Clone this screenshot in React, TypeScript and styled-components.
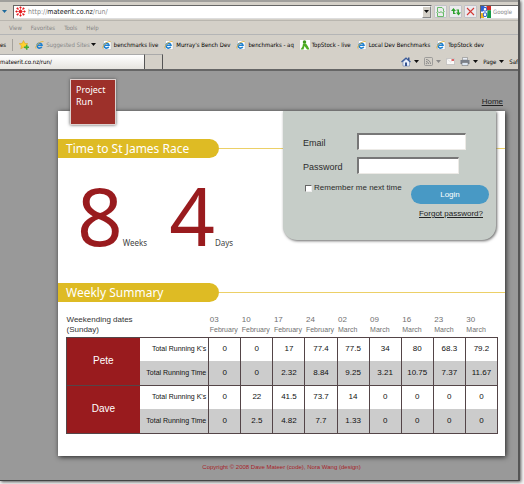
import React from "react";
import styled, { createGlobalStyle } from "styled-components";

const uiFont = `"DejaVu Sans Condensed", "DejaVu Sans", sans-serif`;
const bodyFont = `"Liberation Sans", Arial, sans-serif`;
const titleFont = `"Noto Sans", "Open Sans", sans-serif`;

const GlobalStyle = createGlobalStyle`
  * { box-sizing: border-box; }
  body { margin: 0; background: #f4f4f4; overflow: hidden; }
  button, input { font: inherit; color: inherit; }
  svg { flex: none; }
`;

const Window = styled.div`
  margin: 0 4px 3px 0;
  min-height: calc(100vh - 3px);
  display: flex;
  flex-direction: column;
  background: #999;
  border-right: 2px solid #555;
  border-bottom: 1px solid #444;
  box-shadow: 1px 1px 3px #555;
  overflow: hidden;
`;

const Chrome = styled.div`
  background: #d4d0c8;
  border-top: 2px solid #a09f9c;
  border-bottom: 2px solid #666;
  font: 6px/10px ${uiFont};
  color: #000;
`;

const AddressBar = styled.div`
  display: flex;
  align-items: center;
  height: 19px;
  padding-top: 1px;
  border-bottom: 1px solid #b9b6af;
`;

const Arrow = styled.svg`
  width: 5px;
  height: 3px;
`;

const HistoryButton = styled.button`
  width: 13px;
  padding: 0 0 0 2px;
  border: 0;
  background: none;
  display: flex;
`;

const AddressBox = styled.label`
  flex: 1;
  min-width: 0;
  height: 14px;
  display: flex;
  align-items: center;
  gap: 2px;
  padding-left: 1px;
  background: #fff;
  border: 1px solid #666;
  border-right-color: #ddd;
  border-bottom-color: #ddd;
`;

const Url = styled.span`
  flex: 1;
  color: #888;
  font-size: 7px;
  b { color: #111; font-weight: 400; }
`;

const DropButton = styled.button`
  width: 9px;
  height: 12px;
  padding: 0;
  display: grid;
  place-items: center;
  background: #d4d0c8;
  border: 1px solid #888;
  border-top-color: #fff;
  border-left-color: #fff;
`;

const ToolButton = styled.button`
  width: 13px;
  height: 13px;
  margin-left: 2px;
  padding: 1px;
  display: grid;
  place-items: center;
  background: #ecebee;
  border: 1px solid #c2c2c6;
  border-radius: 1px;
`;

const SearchBox = styled.label`
  width: 38px;
  height: 14px;
  margin-left: 3px;
  display: flex;
  align-items: center;
  gap: 2px;
  background: #fff;
  border: 1px solid #666;
  border-right: 0;
  border-bottom-color: #ddd;
`;

const SearchInput = styled.input`
  width: 25px;
  padding: 0;
  border: 0;
  outline: 0;
  background: none;
  &::placeholder { color: #888; opacity: 1; }
`;

const MenuBar = styled.nav`
  display: flex;
  align-items: center;
  gap: 9px;
  height: 14px;
  padding-left: 9px;
  border-bottom: 1px solid #b4b5b6;
`;

const MenuItem = styled.button`
  padding: 0;
  border: 0;
  background: none;
  color: #858585;
`;

const Favorites = styled.nav`
  display: flex;
  align-items: center;
  gap: 6px;
  height: 19px;
  white-space: nowrap;
`;

const Divider = styled.span`
  width: 1px;
  height: 12px;
  background: #a5a29c;
`;

const Favorite = styled.a<{ $muted?: boolean }>`
  display: flex;
  align-items: center;
  gap: ${(p) => (p.$muted ? 1 : 2)}px;
  color: ${(p) => (p.$muted ? "#888" : "#000")};
  text-decoration: none;
`;

const TabRow = styled.div`
  display: flex;
  align-items: stretch;
  height: 15px;
`;

const Tab = styled.button`
  width: 28%;
  padding: 0;
  text-align: left;
  background: linear-gradient(#fff, #e6e4df);
  border: 0;
  border-top: 1px solid #aaa;
  border-right: 1px solid #555;
`;

const NewTab = styled.button`
  width: 18px;
  border: 0;
  border-top: 1px solid #aaa;
  border-right: 1px solid #555;
  background: #d4d0c8;
`;

const Commands = styled.div`
  flex: 1;
  display: flex;
  align-items: center;
  justify-content: flex-end;
  gap: 5px;
  overflow: hidden;
`;

const Command = styled.button`
  padding: 0;
  border: 0;
  background: none;
  display: flex;
  align-items: center;
  gap: 3px;
`;

const Page = styled.main`
  flex: 1;
  position: relative;
  padding: 0 13px 0 58px;
  font: 8px/10px ${bodyFont};
  color: #2c2c2c;
`;

const TopNav = styled.nav`
  height: 40px;
  display: flex;
  justify-content: flex-end;
  align-items: flex-end;
  padding: 0 2px 4px;
`;

const TextLink = styled.a`
  color: #222;
  text-decoration: underline;
`;

const Logo = styled.h1`
  position: absolute;
  z-index: 1;
  top: 8px;
  left: 70px;
  width: 46px;
  height: 46px;
  margin: 0;
  padding: 4px 5px;
  background: #9d302a;
  border: 1px solid #ddd2d0;
  box-shadow: 0 0 3px #555;
  color: #fff;
  font: 9px/12px ${titleFont};
`;

const Card = styled.div`
  position: relative;
  padding: 28px 0 22px;
  background: #fff;
  box-shadow: 1px 1px 5px #222;
`;

const SectionHead = styled.div`
  display: flex;
  align-items: center;
  &::after {
    content: "";
    flex: 1;
    height: 1px;
    background: #ecd067;
  }
`;

const SectionTitle = styled.h2`
  width: 36%;
  height: 19px;
  margin: 0;
  padding-left: 8px;
  border-radius: 0 10px 10px 0;
  background: #debb24;
  color: #fff;
  font: 12px/19px ${titleFont};
  white-space: nowrap;
`;

const Countdown = styled.div`
  display: flex;
  align-items: baseline;
  gap: 22px;
  height: 125px;
  padding: 12px 0 0 19px;
`;

const Count = styled.div`
  display: flex;
  align-items: baseline;
  font: 8px/10px ${titleFont};
  color: #444;
`;

const Digit = styled.strong`
  color: #991b1e;
  font: 80px/90px ${titleFont};
`;

const LoginPanel = styled.form`
  position: absolute;
  top: 0;
  right: 9px;
  width: 213px;
  height: 129px;
  padding: 22px 7px 0 20px;
  background: #c6cdc8;
  border-radius: 0 0 14px 14px;
  box-shadow: 1px 1px 3px #666;
`;

const Field = styled.label`
  display: flex;
  align-items: center;
  height: 17px;
  margin-bottom: 7px;
  font-size: 9px;
`;

const FieldName = styled.span`
  width: 54px;
  padding-top: 3px;
`;

const TextInput = styled.input<{ $width: number }>`
  width: ${(p) => p.$width}px;
  height: 17px;
  padding: 1px 3px;
  background: #fff;
  border: 1px solid #eceae6;
  border-top: 2px solid #777;
  border-left: 2px solid #777;
  border-radius: 0;
`;

const Remember = styled.label`
  display: flex;
  align-items: center;
  gap: 2px;
  padding: 2px 0 0 2px;
`;

const Checkbox = styled.input`
  appearance: none;
  width: 7px;
  height: 7px;
  margin: 0;
  background: #fff;
  border: 1px solid #666;
  border-right-color: #eee;
  border-bottom-color: #eee;
  &:checked { background: #4899c5; }
`;

const LoginActions = styled.div`
  display: flex;
  flex-direction: column;
  align-items: flex-end;
  gap: 5px;
  margin-top: -8px;
`;

const LoginButton = styled.button`
  width: 78px;
  height: 19px;
  padding: 0;
  border: 0;
  border-radius: 10px;
  background: #4899c5;
  color: #fff;
`;

const Forgot = styled(TextLink)`
  margin-right: 6px;
`;

const Summary = styled.table`
  width: calc(100% - 15px);
  margin: 12px 7px 0 8px;
  table-layout: fixed;
  border-collapse: collapse;
`;

const NameCol = styled.col`
  width: 17%;
`;

const LabelCol = styled.col`
  width: 16%;
`;

const DateHead = styled.th`
  height: 23px;
  padding: 0 0 0 1px;
  color: #707070;
  font-weight: 400;
  text-align: left;
  vertical-align: middle;
`;

const Month = styled.span`
  display: block;
  font-size: 7px;
`;

const WeekHead = styled(DateHead)`
  padding: 0;
  color: #333;
`;

const Group = styled.tbody`
  border: 1px solid #544548;
`;

const Row = styled.tr<{ $shade?: boolean }>`
  height: 24px;
  background: ${(p) => (p.$shade ? "#ccc" : "#fff")};
`;

const Runner = styled.th`
  padding: 0;
  background: #991b1e;
  color: #fff;
  font-size: 10px;
  font-weight: 400;
`;

const RowLabel = styled.th`
  padding: 0 2px 0 0;
  font-weight: 400;
  font-size: 7px;
  text-align: right;
  white-space: nowrap;
  color: #111;
`;

const Cell = styled.td`
  padding: 0;
  border-left: 1px solid #544548;
  text-align: center;
  color: #111;
`;

const Copyright = styled.footer`
  padding: 6px 0 8px;
  color: #a8232a;
  font-size: 6px;
  text-align: center;
`;

const Down = ({ color = "#111" }: { color?: string }) => (
  <Arrow viewBox="0 0 5 3" aria-hidden="true">
    <path d="M0 0h5L2.5 3z" fill={color} />
  </Arrow>
);

const IeIcon = ({ page = true }: { page?: boolean }) => (
  <svg width="10" height="10" viewBox="0 0 20 20" aria-hidden="true">
    {page && <path d="M3 1h11l4 4v14H3z" fill="#fff" stroke="#b5b5b5" />}
    <path d="M13.500 13.500A5 5 0 1 1 14 10.500H6" fill="none" stroke="#1d7fd0" strokeWidth="3.200" />
    <path d="M2 17C-1 13 9 2 17 3" fill="none" stroke="#e9b53b" strokeWidth="1.800" />
  </svg>
);

const StarIcon = () => (
  <svg width="10" height="10" viewBox="0 0 20 20" aria-hidden="true">
    <path d="M9 1l2.6 5.6 6 .7-4.4 4.2 1.2 6L9 14.6 3.6 17.5l1.2-6L.4 7.3l6-.7z" fill="#ffd12e" stroke="#d69a18" />
    <path d="M10 13h4V9.500h3V13h3v3h-3v3.500h-3V16h-4z" fill="#3fae35" />
  </svg>
);

const SplatIcon = () => (
  <svg width="11" height="11" viewBox="0 0 22 22" fill="#e5191c" stroke="#e5191c" aria-hidden="true">
    <path d="M11 3v16M3 11h16M5 5l12 12M17 5L5 17" strokeWidth="1" />
    <circle cx="11" cy="11" r="3" />
    <circle cx="11" cy="3" r="1.600" /><circle cx="11" cy="19" r="1.600" />
    <circle cx="3" cy="11" r="1.600" /><circle cx="19" cy="11" r="1.600" />
    <circle cx="5" cy="5" r="1.600" /><circle cx="17" cy="5" r="1.600" />
    <circle cx="5" cy="17" r="1.600" /><circle cx="17" cy="17" r="1.600" />
  </svg>
);

const PersonIcon = () => (
  <svg width="10" height="10" viewBox="0 0 20 20" aria-hidden="true">
    <path d="M0 0h20v20H0z" fill="#fff" />
    <circle cx="9" cy="4" r="3.500" fill="#3e9a1d" />
    <path d="M6 7h6l4 6 3 6h-5l-5-7-2 7H1l4-6z" fill="#4fae25" />
  </svg>
);

const GoogleIcon = () => (
  <svg width="10" height="12" viewBox="0 0 20 22" preserveAspectRatio="none" aria-hidden="true">
    <path d="M0 0h20v22H0z" fill="#fff" />
    <path d="M0 0h7l-3 10H0z" fill="#2c5fd0" />
    <path d="M11 0h9v8h-9z" fill="#d22b28" />
    <path d="M13 8h7v14h-8z" fill="#159a45" />
    <path d="M0 13h6v9H0z" fill="#f4b61b" />
    <circle cx="8" cy="6" r="3.500" fill="#fff" stroke="#2c5fd0" strokeWidth="2" />
    <circle cx="8" cy="16" r="3.500" fill="#fff" stroke="#2c5fd0" strokeWidth="2" />
  </svg>
);

const HomeIcon = () => (
  <svg width="10" height="10" viewBox="0 0 20 20" aria-hidden="true">
    <path d="M4 9v9h13V9l-6-5z" fill="#e9effa" stroke="#5473ad" />
    <path d="M1 10L10 2l9 8" fill="none" stroke="#3b5c9c" strokeWidth="2.500" />
    <path d="M8 11h4v7H8z" fill="#35538f" />
    <path d="M14 1h3v5h-3z" fill="#35538f" />
  </svg>
);

const FeedIcon = () => (
  <svg width="9" height="9" viewBox="0 0 18 18" fill="none" stroke="#8b8b8b" aria-hidden="true">
    <rect x="1" y="1" width="16" height="16" rx="2" strokeWidth="1.500" />
    <path d="M4 5c5 0 9 4 9 9M4 9c3 0 5 2 5 5" strokeWidth="2" />
    <circle cx="5" cy="13" r="1" fill="#8b8b8b" />
  </svg>
);

const MailIcon = () => (
  <svg width="9" height="7" viewBox="0 0 18 14" aria-hidden="true">
    <path d="M1 1h16v12H1z" fill="#faf9f8" stroke="#aaa" />
    <path d="M1 1l8 7 8-7" fill="none" stroke="#ccc" />
    <path d="M11 2h5v4h-5z" fill="#d66" />
  </svg>
);

const PrinterIcon = () => (
  <svg width="10" height="9" viewBox="0 0 20 18" aria-hidden="true">
    <path d="M5 1h10v5H5z" fill="#e8edf5" stroke="#777" />
    <path d="M1 6h18v8H1z" fill="#7a7f88" />
    <path d="M4 11h12v6H4z" fill="#dce6f2" stroke="#666" />
  </svg>
);

const PageIcon = () => (
  <svg width="9" height="10" viewBox="0 0 18 20" fill="none" stroke="#59b558" aria-hidden="true">
    <path d="M3 1h9l3 3v5M3 9V1M3 12v7h12v-7" strokeWidth="1.800" />
    <path d="M1 11l3-2 3 3 3-3 3 3 4-3" strokeWidth="2" />
  </svg>
);

const RefreshIcon = () => (
  <svg width="10" height="9" viewBox="0 0 20 18" fill="#2ea12d" aria-hidden="true">
    <path d="M5 2l5 6H7v4h2v2H4V8H0zM15 17l-5-6h3V7h-2V5h5v6h4z" />
  </svg>
);

const StopIcon = () => (
  <svg width="9" height="9" viewBox="0 0 18 18" stroke="#d33a35" strokeWidth="2.200" aria-hidden="true">
    <path d="M2 2l14 14M16 2L2 16" />
  </svg>
);

const weeks = [
  ["03", "February"], ["10", "February"], ["17", "February"], ["24", "February"],
  ["02", "March"], ["09", "March"], ["16", "March"], ["23", "March"], ["30", "March"],
];

const runners = [
  {
    name: "Pete",
    distance: ["0", "0", "17", "77.4", "77.5", "34", "80", "68.3", "79.2"],
    time: ["0", "0", "2.32", "8.84", "9.25", "3.21", "10.75", "7.37", "11.67"],
  },
  {
    name: "Dave",
    distance: ["0", "22", "41.5", "73.7", "14", "0", "0", "0", "0"],
    time: ["0", "2.5", "4.82", "7.7", "1.33", "0", "0", "0", "0"],
  },
];

const Browser = () => (
  <Chrome>
    <AddressBar>
      <HistoryButton aria-label="History"><Down color="#1f6a9c" /></HistoryButton>
      <AddressBox>
        <SplatIcon />
        <Url>http://<b>mateerit.co.nz</b>/run/</Url>
        <DropButton aria-label="Show addresses"><Down /></DropButton>
      </AddressBox>
      <ToolButton aria-label="Compatibility view"><PageIcon /></ToolButton>
      <ToolButton aria-label="Refresh"><RefreshIcon /></ToolButton>
      <ToolButton aria-label="Stop"><StopIcon /></ToolButton>
      <SearchBox>
        <GoogleIcon />
        <SearchInput placeholder="Google" aria-label="Search" />
      </SearchBox>
    </AddressBar>
    <MenuBar>
      {["View", "Favorites", "Tools", "Help"].map((m) => <MenuItem key={m}>{m}</MenuItem>)}
    </MenuBar>
    <Favorites>
      <span>es</span>
      <Divider />
      <StarIcon />
      <Favorite href="#" $muted><IeIcon page={false} />Suggested Sites <Down /></Favorite>
      <Favorite href="#"><IeIcon />benchmarks live</Favorite>
      <Favorite href="#"><IeIcon />Murray's Bench Dev</Favorite>
      <Favorite href="#"><IeIcon />benchmarks - aq</Favorite>
      <Favorite href="#"><PersonIcon />TopStock - live</Favorite>
      <Favorite href="#"><IeIcon />Local Dev Benchmarks</Favorite>
      <Favorite href="#"><IeIcon />TopStock dev</Favorite>
    </Favorites>
    <TabRow>
      <Tab>mateerit.co.nz/run/</Tab>
      <NewTab aria-label="New tab" />
      <Commands>
        <Command aria-label="Home page"><HomeIcon /><Down /></Command>
        <Command aria-label="Feeds"><FeedIcon /><Down color="#888" /></Command>
        <Command aria-label="Mail"><MailIcon /></Command>
        <Command aria-label="Print"><PrinterIcon /><Down /></Command>
        <Command>Page <Down /></Command>
        <Command>Saf</Command>
      </Commands>
    </TabRow>
  </Chrome>
);

const SummaryTable = () => (
  <Summary>
    <colgroup>
      <NameCol />
      <LabelCol />
      {weeks.map((w, i) => <col key={i} />)}
    </colgroup>
    <thead>
      <tr>
        <WeekHead colSpan={2}>Weekending dates<br />(Sunday)</WeekHead>
        {weeks.map(([day, month]) => (
          <DateHead key={day + month} scope="col">{day}<Month>{month}</Month></DateHead>
        ))}
      </tr>
    </thead>
    {runners.map((r) => (
      <Group key={r.name}>
        <Row>
          <Runner rowSpan={2} scope="rowgroup">{r.name}</Runner>
          <RowLabel scope="row">Total Running K's</RowLabel>
          {r.distance.map((v, i) => <Cell key={i}>{v}</Cell>)}
        </Row>
        <Row $shade>
          <RowLabel scope="row">Total Running Time</RowLabel>
          {r.time.map((v, i) => <Cell key={i}>{v}</Cell>)}
        </Row>
      </Group>
    ))}
  </Summary>
);

export default function App() {
  return (
    <>
      <GlobalStyle />
      <Window>
        <Browser />
        <Page>
          <Logo>Project<br />Run</Logo>
          <TopNav><TextLink href="#">Home</TextLink></TopNav>
          <Card>
            <SectionHead><SectionTitle>Time to St James Race</SectionTitle></SectionHead>
            <Countdown>
              <Count><Digit>8</Digit>Weeks</Count>
              <Count><Digit>4</Digit>Days</Count>
            </Countdown>
            <SectionHead><SectionTitle>Weekly Summary</SectionTitle></SectionHead>
            <SummaryTable />
            <LoginPanel onSubmit={(e) => e.preventDefault()}>
              <Field><FieldName>Email</FieldName><TextInput type="email" $width={109} /></Field>
              <Field><FieldName>Password</FieldName><TextInput type="password" $width={102} /></Field>
              <Remember><Checkbox type="checkbox" />Remember me next time</Remember>
              <LoginActions>
                <LoginButton type="submit">Login</LoginButton>
                <Forgot href="#">Forgot password?</Forgot>
              </LoginActions>
            </LoginPanel>
          </Card>
          <Copyright>Copyright © 2008 Dave Mateer (code), Nora Wang (design)</Copyright>
        </Page>
      </Window>
    </>
  );
}
